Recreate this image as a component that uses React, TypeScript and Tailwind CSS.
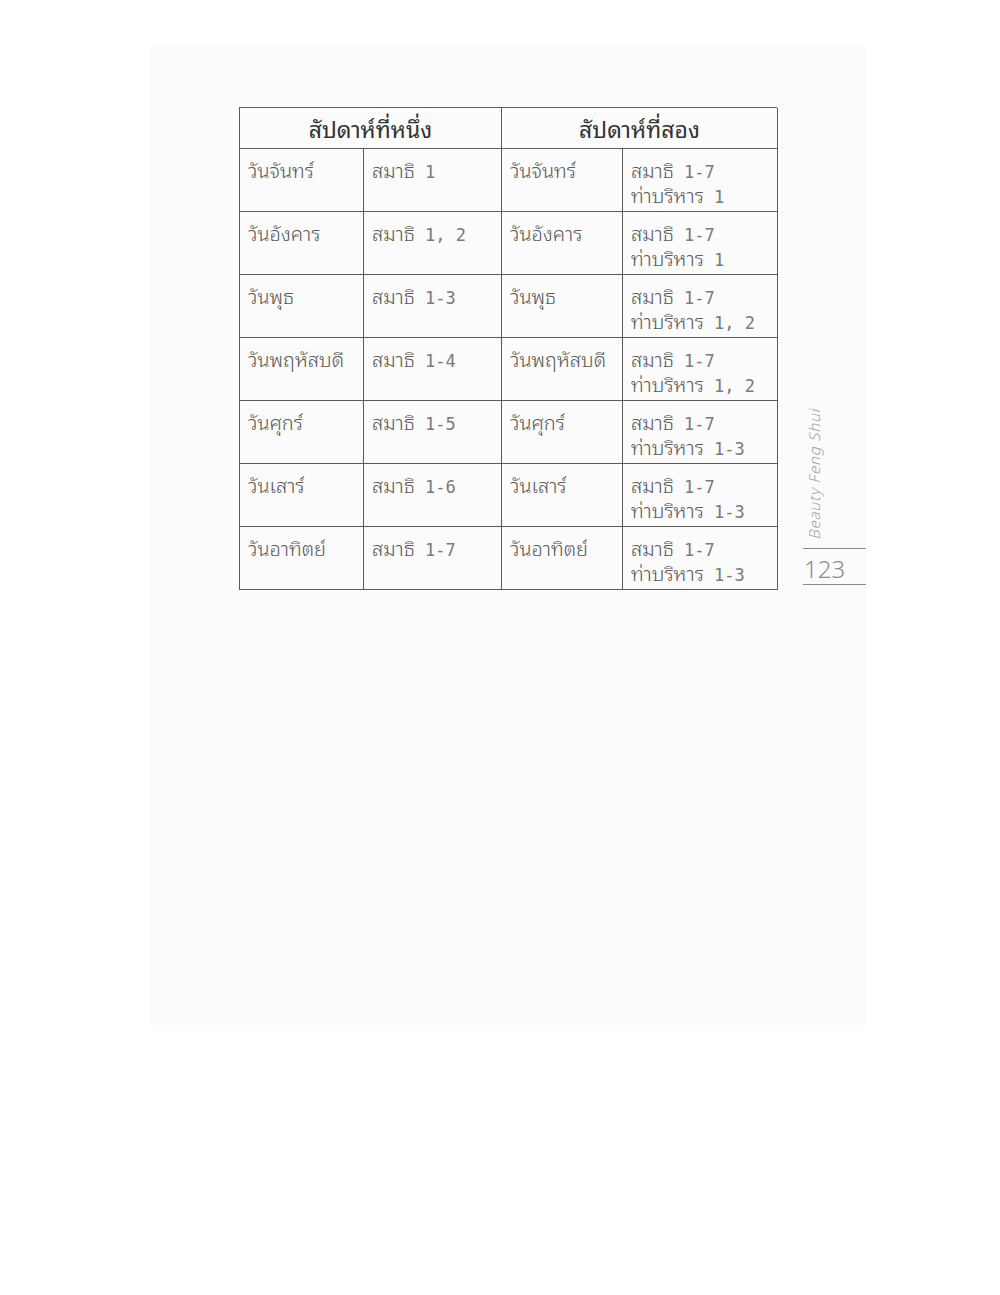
import React from "react";

const rows: [string, string, string, string[]][] = [
  ["วันจันทร์", "สมาธิ 1", "วันจันทร์", ["สมาธิ 1-7", "ท่าบริหาร 1"]],
  ["วันอังคาร", "สมาธิ 1, 2", "วันอังคาร", ["สมาธิ 1-7", "ท่าบริหาร 1"]],
  ["วันพุธ", "สมาธิ 1-3", "วันพุธ", ["สมาธิ 1-7", "ท่าบริหาร 1, 2"]],
  ["วันพฤหัสบดี", "สมาธิ 1-4", "วันพฤหัสบดี", ["สมาธิ 1-7", "ท่าบริหาร 1, 2"]],
  ["วันศุกร์", "สมาธิ 1-5", "วันศุกร์", ["สมาธิ 1-7", "ท่าบริหาร 1-3"]],
  ["วันเสาร์", "สมาธิ 1-6", "วันเสาร์", ["สมาธิ 1-7", "ท่าบริหาร 1-3"]],
  ["วันอาทิตย์", "สมาธิ 1-7", "วันอาทิตย์", ["สมาธิ 1-7", "ท่าบริหาร 1-3"]],
];

const cell = "border-r border-b border-[#5a5a5a] pl-[8px] pt-[8px] h-[63px] leading-[25px]";
const mono = { fontFamily: '"DejaVu Sans Mono", monospace' };

function Line({ text }: { text: string }) {
  const idx = text.indexOf(" ");
  const word = text.slice(0, idx);
  const num = text.slice(idx);
  return (
    <div className="whitespace-pre h-[25px]">
      <span>{word}</span>
      <span className="text-[17px] text-[#7a7a7a] leading-none" style={mono}>{num}</span>
    </div>
  );
}

export default function App() {
  return (
    <div
      className="w-[1000px] h-[1295px] bg-white pt-[45px] pl-[150px]"
      style={{ fontFamily: '"Noto Sans Thai Looped", Loma, Garuda, "Noto Sans Thai", "Noto Sans", "DejaVu Sans", sans-serif' }}
    >
      <div className="w-[716px] h-[980px] bg-[#fbfbfb] pt-[62px] pl-[89px] flex">
        <div className="w-[538px] self-start border-l border-t border-[#5a5a5a] grid grid-cols-[124px_138px_121px_155px] text-[20px] text-[#5a5a5a] font-light">
          <div className="col-span-2 h-[41px] border-r border-b border-[#5a5a5a] flex items-center justify-center text-[23px] text-[#333] font-normal">
            สัปดาห์ที่หนึ่ง
          </div>
          <div className="col-span-2 h-[41px] border-r border-b border-[#5a5a5a] flex items-center justify-center text-[23px] text-[#333] font-normal">
            สัปดาห์ที่สอง
          </div>
          {rows.map((r, i) => (
            <React.Fragment key={i}>
              <div className={cell}>{r[0]}</div>
              <div className={cell}>
                <Line text={r[1]} />
              </div>
              <div className={cell}>{r[2]}</div>
              <div className={cell}>
                {r[3].map((t, j) => (
                  <Line key={j} text={t} />
                ))}
              </div>
            </React.Fragment>
          ))}
        </div>
        <div className="ml-[26px] w-[63px] h-[482px] flex flex-col justify-end pb-[4px]">
          <div
            className="self-start ml-[2px] text-[15px] italic text-[#a0a0a0] font-light tracking-[0.8px] leading-[16px]"
            style={{ writingMode: "vertical-rl", transform: "rotate(180deg)" }}
          >
            Beauty Feng Shui
          </div>
          <div className="mt-[8px] h-px bg-[#8a8a8a]" />
          <div className="h-[35px] flex items-center text-[24px] text-[#8a8a8a] font-light leading-none pl-[1px]">
            123
          </div>
          <div className="h-px bg-[#8a8a8a]" />
        </div>
      </div>
    </div>
  );
}
